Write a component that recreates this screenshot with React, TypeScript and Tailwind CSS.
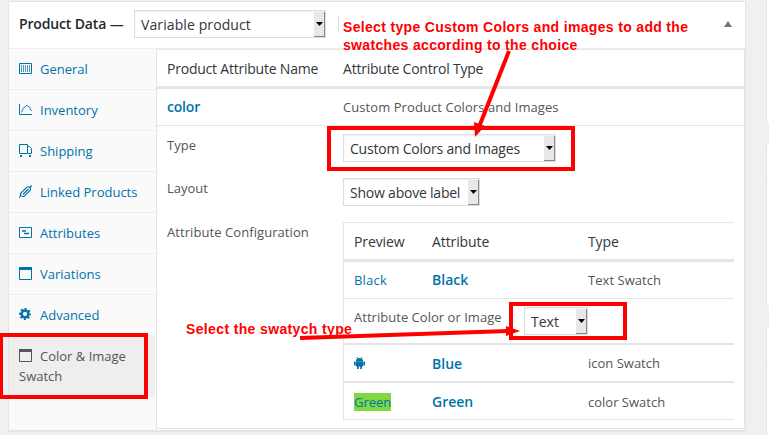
import React from "react";

const open = "font-['Open_Sans',sans-serif]";

function Select({ label, className, text }: { label: string; className: string; text: string }) {
  return (
    <div className={`relative box-border flex h-7 shrink-0 items-center border border-[#ddd] bg-white pl-[6px] text-[14px] leading-7 text-[#32373c] shadow-[inset_0_1px_2px_rgba(0,0,0,0.07)] ${className}`}>
      <span className={`whitespace-nowrap pt-[2px] ${text}`}>{label}</span>
      <span className="absolute right-0 top-px flex h-[25px] w-[11px] items-center justify-center border-b border-r border-[#888] bg-[#e8e8e8]">
        <svg width="7" height="4" viewBox="0 0 7 4"><path d="M0 0h7L3.5 4z" fill="#000" /></svg>
      </span>
    </div>
  );
}

function Icon({ kind, className }: { kind: string; className: string }) {
  return (
    <svg className={`mr-2 inline-block shrink-0 ${className}`} width="13" height="13" viewBox="0 0 13 13" fill="none" stroke="currentColor">
      {kind === "general" && (<><path d="M.5 1.5h12v10H.5z" /><path d="M2.500 3v7M4.500 3v7M6.500 3v7M8.500 3v7M10.500 3v7" opacity=".7" /></>)}
      {kind === "inventory" && (<><path d="M.5 1v10.500H13" /><path d="M2.500 9.500L4 5.500l3.500-3 3 1.500 2 4" strokeWidth=".9" /></>)}
      {kind === "shipping" && (<><path d="M.5.5h8v9h-8zM8.500 2.500h2l2 2v5h-4" /><path d="M1 12h2M10 12h2" strokeWidth="2" /></>)}
      {kind === "linked" && (<path d="M0 12.500L2.500 10M10 3l3-2.500M1.500 11.500V8.500L8 2h3M3 11.500h2L11.500 5V2M4 9.500L9.500 4" strokeWidth="1.1" />)}
      {kind === "attributes" && (<><path d="M.5 1.500h12v10H.5z" /><path d="M3 5h4M5 7.500h5" strokeWidth="1.4" /></>)}
      {kind === "window" && (<><path d="M.5.5h12v12H.5z" /><path d="M0 1.500h13" strokeWidth="3" /></>)}
      {kind === "gear" && (<><circle cx="6" cy="6" r="3.400" strokeWidth="2.500" /><circle cx="6" cy="6" r="5" strokeWidth="2" strokeDasharray="2 1.930" strokeDashoffset="1" /></>)}
    </svg>
  );
}

const tabs = [
  ["general", "General", "border-b"],
  ["inventory", "Inventory", "border-b"],
  ["shipping", "Shipping", "border-b"],
  ["linked", "Linked Products", "border-b"],
  ["attributes", "Attributes", "border-b"],
  ["window", "Variations", "border-b"],
];

function Sidebar() {
  return (
    <nav className="w-[147px] shrink-0 bg-[#fafafa] text-[13px] text-[#0073aa]">
      {tabs.map(([kind, label, border]) => (
        <div key={label} className={`flex h-[41px] items-center border-[#eee] pl-[10px] ${border}`}>
          <Icon kind={kind} className="mb-px" />
          <span className="pt-[2px]">{label}</span>
        </div>
      ))}
      <div className="flex h-10 items-center pl-[10px]">
        <Icon kind="gear" className="mb-px" />
        <span className="pt-[2px]">Advanced</span>
      </div>
      <div className="h-[62px] w-[146px] bg-[#eee] pl-[10px] pt-[11px] leading-5 text-[#555]">
        <Icon kind="window" className="align-[-1px]" />Color &amp; Image<br />Swatch
      </div>
    </nav>
  );
}

function AttributeTable() {
  return (
    <div className="h-[198px] w-[391px] border-b border-l border-t border-[#e5e5e5]">
      <div className="flex h-[39px] items-center border-b-[3px] border-[#e5e5e5] pl-[10px] pt-[2px] text-[14px] tracking-[-0.1px] text-[#32373c]">
        <span className="w-[78px]">Preview</span>
        <span className="w-[156px]">Attribute</span>
        <span>Type</span>
      </div>
      <div className="flex h-[37px] items-center border-b border-[#e5e5e5] pl-[10px]">
        <span className="w-[78px] tracking-[0.2px] text-[#0073aa]">Black</span>
        <b className="w-[156px] text-[14px] font-semibold text-[#0073aa]">Black</b>
        <span className="tracking-[0.05px]">Text Swatch</span>
      </div>
      <div className="flex h-[46px] items-start border-b-2 border-[#e5e5e5] pl-[10px]">
        <span className="w-[170px] whitespace-nowrap pt-[9px] tracking-[0.03px]">Attribute Color or Image</span>
        <Select label="Text" className="mt-[8px] w-[64px]" text="" />
      </div>
      <div className="flex h-[38px] items-center border-b-2 border-[#e5e5e5] pl-[10px]">
        <span className="w-[78px] text-[#0073aa]">
          <svg width="11" height="12" viewBox="0 0 11 12" fill="currentColor"><path d="M2 4C2 2 3 1 5.500 1S9 2 9 4zM2 4.300h7V9.500H2zM0 4.500h1.700v4H0zM9.300 4.500H11v4H9.300zM3 9h1.800v3H3zM6.200 9H8v3H6.200zM2.500 0h.8l1 1.500h-.8zM8.500 0h-.8l-1 1.500h.8z" /></svg>
        </span>
        <b className="w-[156px] pt-px text-[14px] font-semibold text-[#0073aa]">Blue</b>
        <span>icon Swatch</span>
      </div>
      <div className="flex h-[37px] items-center pl-[10px]">
        <span className="w-[78px] text-[#0073aa]"><span className="bg-[#81d742]">Green</span></span>
        <b className="w-[156px] text-[14px] font-semibold text-[#0073aa]">Green</b>
        <span>color Swatch</span>
      </div>
    </div>
  );
}

function Panel() {
  return (
    <section className="h-[380px] grow border border-[#e5e5e5] bg-white text-[13px] leading-[18px] text-[#555]">
      <div className="flex h-[39px] items-center border-b-[3px] border-[#e5e5e5] pl-[10px] pt-[2px] text-[14px] tracking-[-0.22px] text-[#32373c]">
        <span className="w-[176px]">Product Attribute Name</span>
        <span>Attribute Control Type</span>
      </div>
      <div className="flex h-[37px] items-center border-b border-[#e5e5e5] pl-[10px]">
        <b className="w-[176px] text-[14px] font-semibold tracking-[-0.2px] text-[#0073aa]">color</b>
        <span className="tracking-[0.07px]">Custom Product Colors and Images</span>
      </div>
      <div className="flex h-[44px] pl-[10px] pt-[8px]">
        <span className="w-[176px] pt-[2px]">Type</span>
        <Select label="Custom Colors and Images" className="w-[213px]" text="tracking-[-0.2px]" />
      </div>
      <div className="flex h-[44px] pl-[10px] pt-[8px]">
        <span className="w-[176px] pt-px">Layout</span>
        <Select label="Show above label" className="w-[137px]" text="tracking-[-0.22px]" />
      </div>
      <div className="flex pl-[10px] pt-[8px]">
        <span className="w-[176px] shrink-0 pt-px tracking-[0.07px]">Attribute Configuration</span>
        <AttributeTable />
      </div>
    </section>
  );
}

export default function App() {
  return (
    <main className={`relative flex h-[435px] w-[769px] overflow-hidden bg-[#f0f0f0] pl-2 pt-px ${open}`}>
      <div className="h-[430px] w-[738px] shrink-0 border border-[#e5e5e5] bg-white shadow-[0_1px_1px_rgba(0,0,0,0.04)]">
        <header className="flex h-[47px] items-center border-b border-[#eee] pb-[2px] pl-[10px] text-[14px] text-[#23282d]">
          <b className="w-[115px] whitespace-nowrap pb-px font-semibold tracking-[-0.15px]">Product Data —</b>
          <Select label="Variable product" className="w-[192px]" text="tracking-[0.1px]" />
          <span className="ml-3 h-4 w-px bg-[#ddd]" />
          <svg className="ml-auto mr-[13px]" width="8" height="6" viewBox="0 0 8 6"><path d="M4 0l4 6H0z" fill="#72777c" /></svg>
        </header>
        <div className="flex h-[381px]">
          <Sidebar />
          <Panel />
        </div>
      </div>
      <aside className="ml-5 w-1 shrink-0">
        <div className="h-[123px] border-b border-l border-[#e5e5e5] bg-white" />
        <div className="mt-5 h-[163px] border border-r-0 border-[#e5e5e5] bg-white"><div className="h-[36px] border-b border-[#eee]" /></div>
        <div className="mt-5 h-[120px] border border-r-0 border-[#e5e5e5] bg-white"><div className="h-[36px] border-b border-[#eee]" /></div>
      </aside>
      <div className="absolute left-[343px] top-[18px] whitespace-nowrap font-['Liberation_Sans',sans-serif] text-[14px] font-bold leading-[18px] tracking-[0.33px] text-[#f00]">
        <div>Select type Custom Colors and images to add the</div>
        <div>swatches according to the choice</div>
      </div>
      <div className="absolute left-[186px] top-[320px] whitespace-nowrap font-['Liberation_Sans',sans-serif] text-[14px] font-bold leading-[18px] tracking-[0.36px] text-[#f00]">Select the swatych type</div>
      <div className="absolute left-[327px] top-[126px] h-[45px] w-[248px] border-4 border-[#f00]" />
      <div className="absolute left-[509px] top-[302px] h-[38px] w-[118px] border-4 border-[#f00]" />
      <div className="absolute left-[-1px] top-[333px] h-[66px] w-[149px] border-4 border-[#f00]" />
      <svg className="absolute inset-0" width="769" height="435" viewBox="0 0 769 435">
        <path d="M509 51L479 127" stroke="#f00" strokeWidth="4" />
        <path d="M475 137l-1-15 11 4z" fill="#f00" />
        <path d="M300 338L508 331" stroke="#f00" strokeWidth="4" />
        <path d="M520 331l-14-5v10z" fill="#f00" />
      </svg>
    </main>
  );
}
